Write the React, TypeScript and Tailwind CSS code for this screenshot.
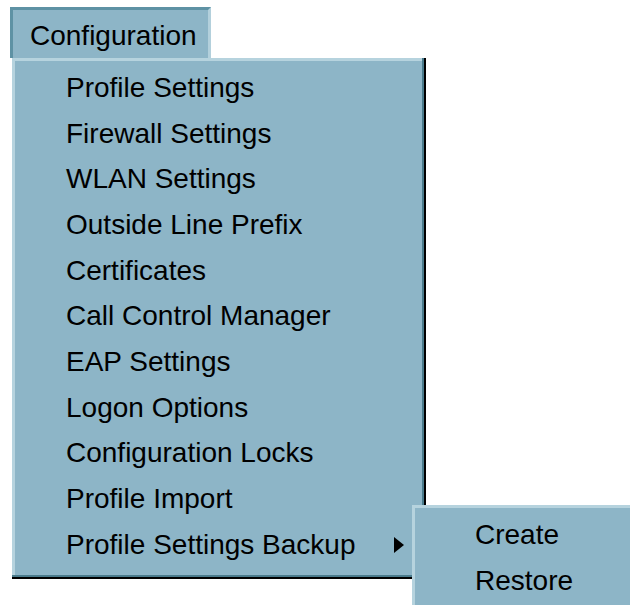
import React from 'react';

const items = [
  'Profile Settings',
  'Firewall Settings',
  'WLAN Settings',
  'Outside Line Prefix',
  'Certificates',
  'Call Control Manager',
  'EAP Settings',
  'Logon Options',
  'Configuration Locks',
  'Profile Import',
  'Profile Settings Backup',
];

const font = { fontFamily: '"Liberation Sans", Arial, sans-serif' };

export default function App() {
  return (
    <div className="relative w-[630px] h-[605px] overflow-hidden bg-white text-black" style={font}>
      <div className="pt-[7px] pl-[10px]">
        {/* menu bar item, pressed */}
        <div className="w-[201px] h-[51px] bg-[#8db5c7] border-t-[3px] border-l-[3px] border-r-[3px] border-t-[#5e92a4] border-l-[#5e92a4] border-r-[#b3d0dc] flex items-center pl-[17px] pt-[4px] text-[28px] leading-none">
          Configuration
        </div>

        {/* dropdown */}
        <div className="ml-[2px] w-[414px] border-r-2 border-b-2 border-black">
          <div className="border-r-2 border-b-2 border-[#4a7b8c]">
            <div className="bg-[#8db5c7] border-t-[3px] border-l-[3px] border-[#b6d3de] pt-[4px] pb-[7px]">
              {items.map((label, i) => (
                <div key={label} className="h-[45.7px] flex items-center pl-[51px] pr-[17px] text-[28px] leading-none">
                  <span className="flex-1">{label}</span>
                  {i === items.length - 1 && (
                    <svg width="11" height="16" viewBox="0 0 11 16">
                      <path d="M0 0 L10 8 L0 16 Z" fill="#000" />
                    </svg>
                  )}
                </div>
              ))}
            </div>
          </div>
        </div>
      </div>

      {/* submenu */}
      <div className="absolute left-[412px] top-[505px] w-[230px] h-[120px] bg-[#8db5c7] border-t-[3px] border-l-[3px] border-[#b6d3de] pt-[4px]">
        {['Create', 'Restore'].map((label) => (
          <div key={label} className="h-[45.7px] flex items-center pl-[60px] text-[28px] leading-none">
            {label}
          </div>
        ))}
      </div>
    </div>
  );
}
